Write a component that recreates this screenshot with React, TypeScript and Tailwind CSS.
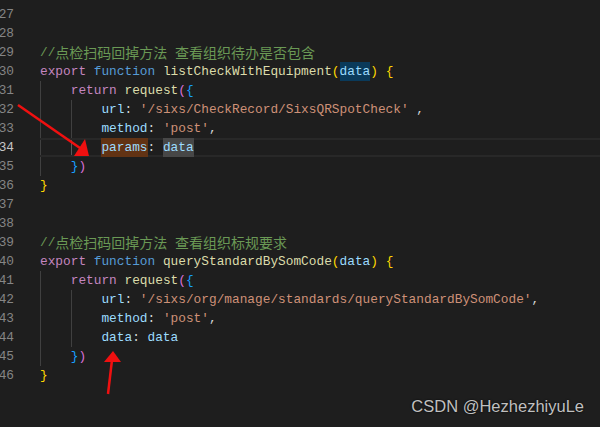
import React from 'react'

// token colours (VS Code Dark+)
const C = {
  kw: 'text-[#c586c0]',
  st: 'text-[#569cd6]',
  fn: 'text-[#dcdcaa]',
  vr: 'text-[#9cdcfe]',
  str: 'text-[#ce9178]',
  p: 'text-[#d4d4d4]',
  cm: 'text-[#6a9955]',
  b1: 'text-[#ffd700]',
  b2: 'text-[#da70d6]',
  b3: 'text-[#179fff]',
}

type Tok = { t: string; c: string; bg?: string; cjk?: boolean }
type Line = { n: number; indent: number; toks: Tok[]; active?: boolean }

const tk = (t: string, c: string, bg?: string): Tok => ({ t, c, bg })

function comment(a: string, b: string): Tok[] {
  return [
    tk('//', C.cm),
    { t: a, c: C.cm, cjk: true },
    tk(' ', C.cm),
    { t: b, c: C.cm, cjk: true },
  ]
}

const lines: Line[] = [
  { n: 27, indent: 0, toks: [] },
  { n: 28, indent: 0, toks: [] },
  { n: 29, indent: 0, toks: comment('点检扫码回掉方法', '查看组织待办是否包含') },
  {
    n: 30,
    indent: 0,
    toks: [
      tk('export', C.kw), tk(' ', C.p), tk('function', C.st), tk(' ', C.p),
      tk('listCheckWithEquipment', C.fn), tk('(', C.b1), tk('data', C.vr, 'bg-[#0a3a5a]'),
      tk(')', C.b1), tk(' ', C.p), tk('{', C.b1),
    ],
  },
  { n: 31, indent: 1, toks: [tk('return', C.kw), tk(' ', C.p), tk('request', C.fn), tk('(', C.b2), tk('{', C.b3)] },
  {
    n: 32,
    indent: 2,
    toks: [tk('url', C.vr), tk(': ', C.p), tk("'/sixs/CheckRecord/SixsQRSpotCheck'", C.str), tk(' ,', C.p)],
  },
  { n: 33, indent: 2, toks: [tk('method', C.vr), tk(': ', C.p), tk("'post'", C.str), tk(',', C.p)] },
  {
    n: 34,
    indent: 2,
    active: true,
    toks: [tk('params', C.vr, 'bg-[#623314]'), tk(': ', C.p), tk('data', C.vr, 'bg-[#474747]')],
  },
  { n: 35, indent: 1, toks: [tk('}', C.b3), tk(')', C.b2)] },
  { n: 36, indent: 0, toks: [tk('}', C.b1)] },
  { n: 37, indent: 0, toks: [] },
  { n: 38, indent: 0, toks: [] },
  { n: 39, indent: 0, toks: comment('点检扫码回掉方法', '查看组织标规要求') },
  {
    n: 40,
    indent: 0,
    toks: [
      tk('export', C.kw), tk(' ', C.p), tk('function', C.st), tk(' ', C.p),
      tk('queryStandardBySomCode', C.fn), tk('(', C.b1), tk('data', C.vr),
      tk(')', C.b1), tk(' ', C.p), tk('{', C.b1),
    ],
  },
  { n: 41, indent: 1, toks: [tk('return', C.kw), tk(' ', C.p), tk('request', C.fn), tk('(', C.b2), tk('{', C.b3)] },
  {
    n: 42,
    indent: 2,
    toks: [tk('url', C.vr), tk(': ', C.p), tk("'/sixs/org/manage/standards/queryStandardBySomCode'", C.str), tk(',', C.p)],
  },
  { n: 43, indent: 2, toks: [tk('method', C.vr), tk(': ', C.p), tk("'post'", C.str), tk(',', C.p)] },
  { n: 44, indent: 2, toks: [tk('data', C.vr), tk(': ', C.p), tk('data', C.vr)] },
  { n: 45, indent: 1, toks: [tk('}', C.b3), tk(')', C.b2)] },
  { n: 46, indent: 0, toks: [tk('}', C.b1)] },
]

function CodeLine({ line }: { line: Line }) {
  const guides = Array.from({ length: line.indent })
  return (
    <div className="flex h-[19px]">
      <div
        className={`w-[14px] flex justify-end overflow-hidden leading-[19px] ${
          line.active ? 'text-[#c6c6c6]' : 'text-[#858585]'
        }`}
      >
        {line.n}
      </div>
      <div className="ml-[26px] flex-1 relative flex whitespace-pre">
        {line.active && (
          <div className="absolute inset-0 border-y-2 border-[#282828] pointer-events-none" />
        )}
        {guides.map((_, i) => (
          <span
            key={i}
            className={`inline-block h-[19px] w-[30.72px] border-l ${
              line.active && i === 1 ? 'border-[#5a5a5a]' : 'border-[#404040]'
            }`}
          />
        ))}
        {line.toks.map((tok, i) => (
          <span
            key={i}
            className={`relative inline-block h-[19px] leading-[19px] ${tok.c} ${tok.bg ?? ''} ${
              tok.cjk ? "text-[14px] font-['Noto_Sans_CJK_SC',sans-serif]" : ''
            }`}
          >
            {tok.t}
          </span>
        ))}
      </div>
    </div>
  )
}

export default function App() {
  return (
    <div className="relative w-[600px] h-[427px] overflow-hidden bg-[#1e1e1e] pt-[5px] font-['Liberation_Mono','Noto_Sans_CJK_SC',monospace] text-[12.8px]">
      {lines.map((l) => (
        <CodeLine key={l.n} line={l} />
      ))}

      {/* red arrows drawn over the screenshot */}
      <svg className="absolute inset-0 pointer-events-none" width="600" height="427" viewBox="0 0 600 427">
        <line x1="18" y1="105" x2="80" y2="148" stroke="#f01010" strokeWidth="2.5" />
        <polygon points="74,156 85,139 89,156" fill="#f01010" />
        <line x1="108" y1="394" x2="112" y2="360" stroke="#f01010" strokeWidth="2.5" />
        <polygon points="104,362 113,351 121,362" fill="#f01010" />
      </svg>

      <div className="absolute right-[16px] top-[396px] text-[16.5px] leading-[20px] text-[#c0c0c0] font-['Liberation_Sans',Arial,sans-serif] [text-shadow:0_0_2px_#000]">
        CSDN @HezhezhiyuLe
      </div>
    </div>
  )
}
